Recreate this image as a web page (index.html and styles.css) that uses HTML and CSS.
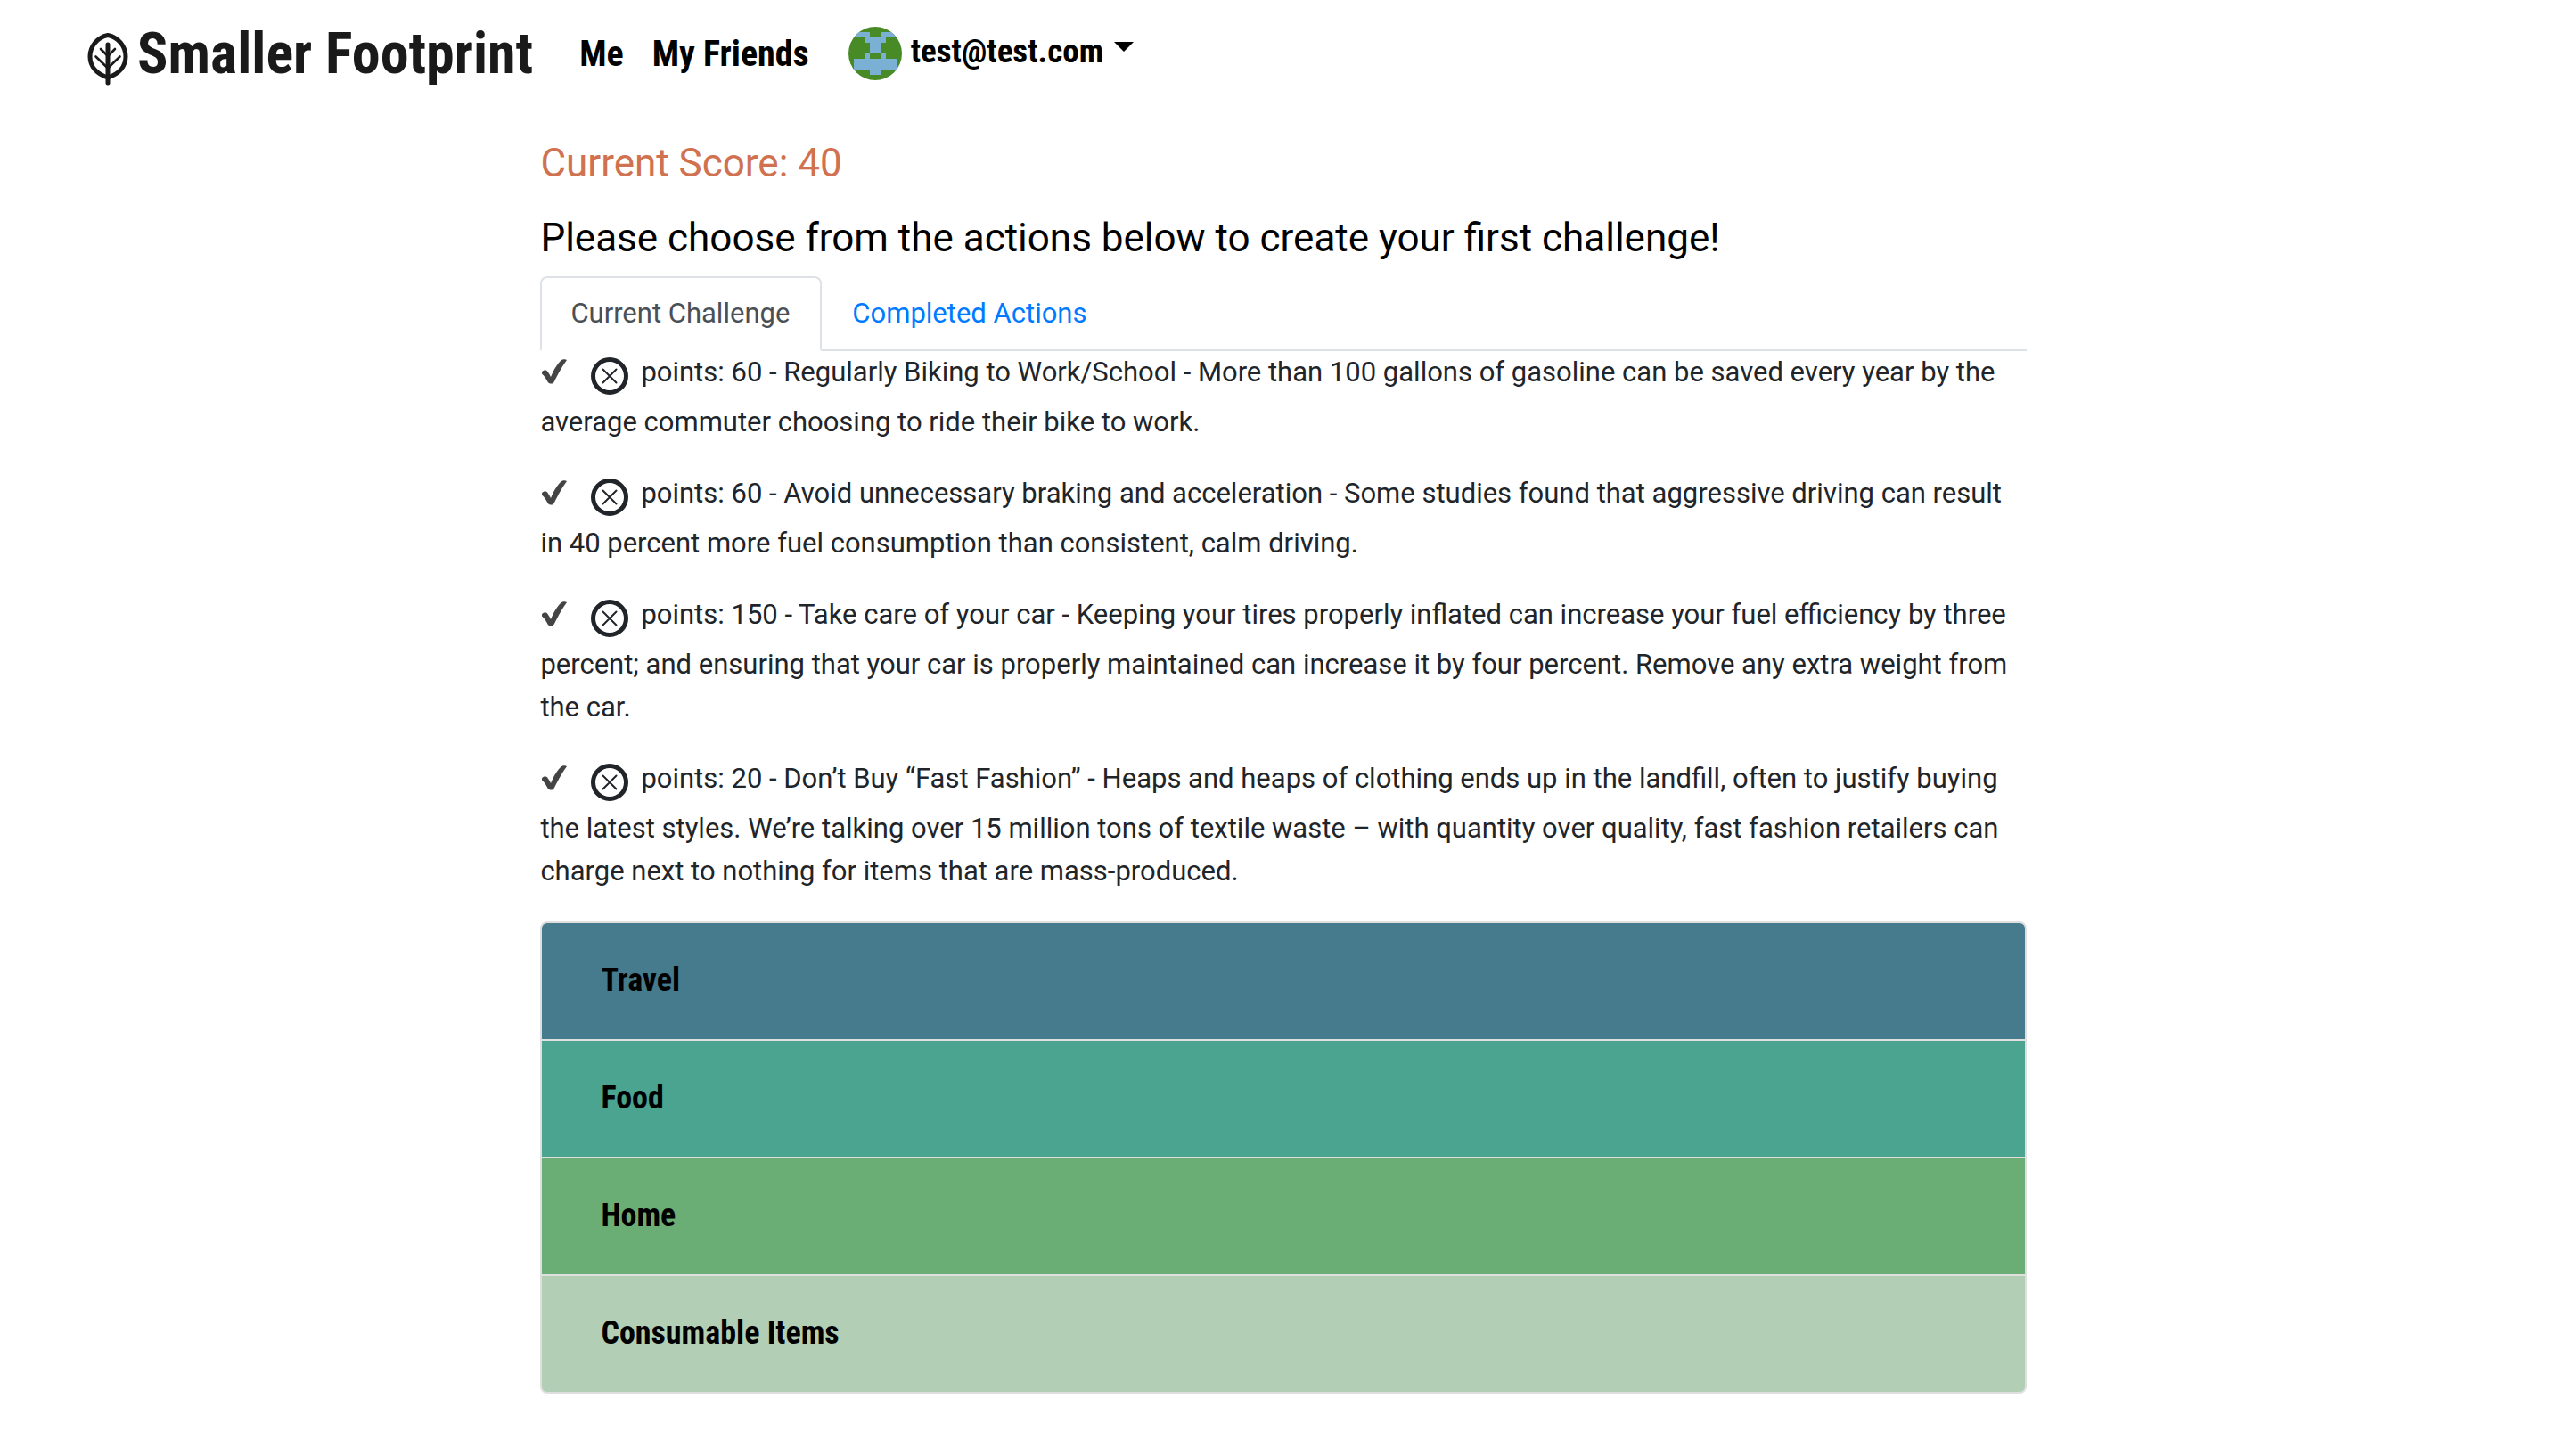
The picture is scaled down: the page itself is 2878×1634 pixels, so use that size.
FILE: index.html
```html
<!DOCTYPE html>
<html lang="en">
<head>
<meta charset="utf-8">
<title>Smaller Footprint</title>
<link rel="stylesheet" href="styles.css">
</head>
<body>
<svg class="sprite" aria-hidden="true">
  <symbol id="check" viewBox="0 0 32 32"><path fill="#444" d="M2 15.500C3.500 13 7 13 8.500 15C9.800 17 10.800 18.500 12 21C15.500 12.500 19.500 6 23.500 2.500C25 1.200 28.500 1 30 2C25.500 8 20.500 17 16.500 25C15 29.500 10.500 29.500 8.500 26.500C7 23.500 5 20 2 17.500Z"/></symbol>
  <symbol id="cross" viewBox="0 0 42 42"><circle cx="21" cy="21" r="18.500" fill="none" stroke="#212529" stroke-width="5"/><path d="M13.500 13.500l15 15M28.500 13.500l-15 15" stroke="#212529" stroke-width="2" stroke-linecap="round"/></symbol>
</svg>
<header class="navbar">
  <a class="brand" href="#">
    <svg class="brand-icon" viewBox="0 0 46 60" aria-hidden="true"><g fill="none" stroke="#1a1a1a" stroke-linecap="round" stroke-linejoin="round"><path stroke-width="5" d="M23 3.500C35 6 43 16 43 27.500S35 47 23 51C11 47 3 39 3 27.500S11 6 23 3.500Z"/><path stroke-width="5" d="M23 14V57"/><path stroke-width="2.600" d="M15 19l8 8l8-8M9.500 27.500l13.500 13l13.500-13"/></g></svg>
    <span>Smaller Footprint</span>
  </a>
  <nav class="links">
    <a href="#">Me</a>
    <a href="#">My Friends</a>
  </nav>
  <button class="account" type="button">
    <svg class="avatar" viewBox="0 0 10 10" shape-rendering="crispEdges" aria-hidden="true"><path fill="#478a26" d="M0 0h10v10H0z"/><path fill="#79b0d4" d="M1 1h3v1H1zM6 1h3v1H6zM3 2h4v1H3zM4 3h2v2H4zM3 5h1v1H3zM6 5h1v1H6zM1 6h8v2H1zM4 8h2v1H4z"/></svg>
    <span class="email">test@test.com<span class="caret"></span></span>
  </button>
</header>
<main class="content">
  <h1 class="score">Current Score: 40</h1>
  <h2 class="prompt">Please choose from the actions below to create your first challenge!</h2>
  <nav class="tabs">
    <a class="tab active" href="#">Current Challenge</a>
    <a class="tab" href="#">Completed Actions</a>
  </nav>
  <section class="actions">
    <p><button class="icon check" type="button" aria-label="Complete"><svg><use href="#check"/></svg></button><button class="icon cross" type="button" aria-label="Remove"><svg><use href="#cross"/></svg></button>points: 60 - Regularly Biking to Work/School - More than 100 gallons of gasoline can be saved every year by the average commuter choosing to ride their bike to work.</p>
    <p><button class="icon check" type="button" aria-label="Complete"><svg><use href="#check"/></svg></button><button class="icon cross" type="button" aria-label="Remove"><svg><use href="#cross"/></svg></button>points: 60 - Avoid unnecessary braking and acceleration - Some studies found that aggressive driving can result in 40 percent more fuel consumption than consistent, calm driving.</p>
    <p><button class="icon check" type="button" aria-label="Complete"><svg><use href="#check"/></svg></button><button class="icon cross" type="button" aria-label="Remove"><svg><use href="#cross"/></svg></button>points: 150 - Take care of your car - Keeping your tires properly inflated can increase your fuel efficiency by three percent; and ensuring that your car is properly maintained can increase it by four percent. Remove any extra weight from the car.</p>
    <p><button class="icon check" type="button" aria-label="Complete"><svg><use href="#check"/></svg></button><button class="icon cross" type="button" aria-label="Remove"><svg><use href="#cross"/></svg></button>points: 20 - Don’t Buy “Fast Fashion” - Heaps and heaps of clothing ends up in the landfill, often to justify buying the latest styles. We’re talking over 15 million tons of textile waste – with quantity over quality, fast fashion retailers can charge next to nothing for items that are mass-produced.</p>
  </section>
  <section class="accordion">
    <button class="category travel" type="button">Travel</button>
    <button class="category food" type="button">Food</button>
    <button class="category home" type="button">Home</button>
    <button class="category consumables" type="button">Consumable Items</button>
  </section>
</main>
</body>
</html>
```
FILE: styles.css
```css
* { box-sizing: border-box; }
body {
  margin: 0;
  background: #fff;
  color: #212529;
  font: 31px/48px Roboto, "Liberation Sans", sans-serif;
}
a { text-decoration: none; }
button {
  margin: 0;
  padding: 0;
  border: 0;
  background: none;
  color: inherit;
  font: inherit;
}
.sprite { display: none; }

.navbar {
  display: flex;
  align-items: center;
  height: 120px;
  padding-left: 98px;
  color: #000;
  font: bold 40px/48px "Roboto Condensed", "Liberation Sans Narrow", sans-serif;
}
.brand {
  display: flex;
  align-items: center;
  gap: 10px;
  margin-top: 2px;
  color: #1a1a1a;
  font-size: 64px;
  line-height: 72px;
}
.brand-icon { width: 46px; height: 60px; margin-top: 10px; }
.links { display: flex; gap: 32px; margin: 2px 0 0 52px; }
.links a { color: #000; }
.account {
  display: flex;
  align-items: center;
  gap: 10px;
  margin-left: 44px;
  font-size: 37px;
}
.avatar { width: 60px; height: 60px; border-radius: 50%; }
.email { padding-bottom: 4px; }
.caret {
  display: inline-block;
  margin-left: 12px;
  border: 11px solid transparent;
  border-top-color: #000;
  border-bottom: 0;
  vertical-align: 12px;
}

.content { width: 58%; margin: 0 auto; padding: 37px 0 0 2px; }
.score, .prompt {
  margin: 0 0 32px;
  font: 400 44px/52px Roboto, sans-serif;
}
.score { color: #d07150; }
.prompt { margin-bottom: 17px; color: #000; }

.tabs { display: flex; border-bottom: 2px solid #dee2e6; }
.tab {
  margin-bottom: -2px;
  padding: 16px 34px 16px 32px;
  border: 2px solid transparent;
  border-radius: 8px 8px 0 0;
  color: #007bff;
}
.tab.active {
  border-color: #dee2e6 #dee2e6 #fff;
  background: #fff;
  color: #495057;
}

.actions p { margin: 0 0 32px; }
.icon {
  display: inline-flex;
  align-items: center;
  height: 56px;
  vertical-align: top;
}
.icon svg { display: block; }
.check { margin-right: 25px; padding-bottom: 8px; }
.check svg { width: 32px; height: 32px; }
.cross { margin-right: 14px; }
.cross svg { width: 42px; height: 42px; }

.accordion {
  display: grid;
  gap: 2px;
  overflow: hidden;
  border: 2px solid #dfdfdf;
  border-radius: 8px;
  background: #dfdfdf;
}
.category {
  padding: 40px 66px 42px;
  color: #000;
  font: bold 36px/48px "Roboto Condensed", "Liberation Sans Narrow", sans-serif;
  text-align: left;
}
.travel { background: #457b8d; }
.food { background: #4aa48f; }
.home { background: #6aae75; }
.consumables { background: #b2cfb6; }
```
